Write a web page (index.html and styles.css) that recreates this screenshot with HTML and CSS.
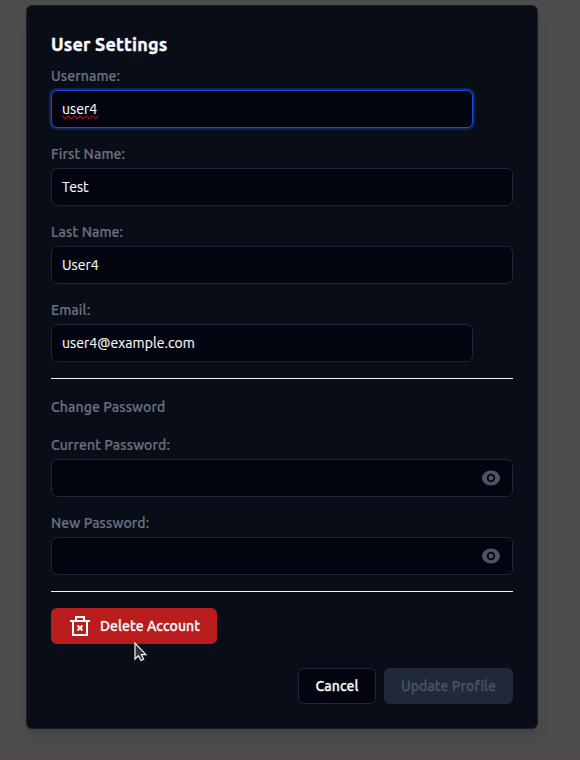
FILE: index.html
```html
<!DOCTYPE html>
<html lang="en">
<head>
<meta charset="utf-8">
<title>User Settings</title>
<link rel="stylesheet" href="styles.css">
</head>
<body>
<main class="modal">
  <h1 class="title">User Settings</h1>
  <div class="field"><span class="label">Username:</span><div class="input short focused"><span class="misspelled">user4<svg class="squiggle" width="36" height="5" viewBox="0 0 36 5"><path d="M0 1 Q1.500 1 3 3.500 Q4.500 3.500 6 1 Q7.500 1 9 3.500 Q10.500 3.500 12 1 Q13.500 1 15 3.500 Q16.500 3.500 18 1 Q19.500 1 21 3.500 Q22.500 3.500 24 1 Q25.500 1 27 3.500 Q28.500 3.500 30 1 Q31.500 1 33 3.500 Q34.500 3.500 36 1"/></svg></span></div></div>
  <div class="field"><span class="label">First Name:</span><div class="input">Test</div></div>
  <div class="field"><span class="label">Last Name:</span><div class="input">User4</div></div>
  <div class="field"><span class="label">Email:</span><div class="input short">user4@example.com</div></div>
  <hr class="divider">
  <h2 class="subtitle">Change Password</h2>
  <div class="field"><span class="label">Current Password:</span><div class="input password"><svg class="eye" width="20" height="20" viewBox="0 0 20 20"><path d="M10 2.500C5.300 2.500 1 6 1 10s4.300 7.500 9 7.500 9-3.500 9-7.500-4.300-7.500-9-7.500Zm0 11.700a4.200 4.200 0 1 1 0-8.400 4.200 4.200 0 0 1 0 8.400Zm0-6.600a2.400 2.400 0 1 0 0 4.800 2.400 2.400 0 0 0 0-4.800Z"/></svg></div></div>
  <div class="field"><span class="label">New Password:</span><div class="input password"><svg class="eye" width="20" height="20" viewBox="0 0 20 20"><path d="M10 2.500C5.300 2.500 1 6 1 10s4.300 7.500 9 7.500 9-3.500 9-7.500-4.300-7.500-9-7.500Zm0 11.700a4.200 4.200 0 1 1 0-8.400 4.200 4.200 0 0 1 0 8.400Zm0-6.600a2.400 2.400 0 1 0 0 4.800 2.400 2.400 0 0 0 0-4.800Z"/></svg></div></div>
  <hr class="divider">
  <div class="danger"><button class="button delete"><svg class="trash" width="20" height="20" viewBox="0 0 20 20"><path d="M0 5h20M3 5v14h14V5M6 5V1h8v4"/><path class="cross" d="M7.500 9.500l5 5M12.500 9.500l-5 5"/></svg><span>Delete Account</span></button></div>
  <footer class="actions"><button class="button cancel">Cancel</button><button class="button update" disabled>Update Profile</button></footer>
</main>
<svg class="cursor" width="13" height="20" viewBox="0 0 13 20"><path d="M1 1v16l3.400-3.300 2.600 4.800 2.700-1.300-2.300-4.500H12Z"/></svg>
</body>
</html>
```

FILE: styles.css
```css
* { box-sizing: border-box; }
body {
  margin: 0;
  height: 760px;
  padding: 5px 42px 0 26px;
  overflow: hidden;
  background: #4c4c4c;
  border-bottom: 3px solid #514a50;
  font: 14px/20px Ubuntu, "Noto Sans", sans-serif;
  color: #f8fafc;
}
.modal {
  width: 512px;
  height: 724px;
  padding: 24px;
  background: #090d18;
  border: 1px solid #172031;
  border-radius: 6px;
  box-shadow: 0 10px 15px -3px rgba(0,0,0,.1), 0 4px 6px -4px rgba(0,0,0,.1);
}
.title { margin: 0 0 8px; padding-top: 1px; font-size: 18px; line-height: 27px; font-weight: 700; letter-spacing: .19px; -webkit-text-stroke: .4px; }
.field { margin-bottom: 16px; }
.label, .subtitle { display: block; margin: 0 0 4px; font-size: 14px; line-height: 20px; font-weight: 500; color: #6b7280; letter-spacing: .1px; -webkit-text-stroke: .2px; }
.input {
  display: flex;
  align-items: center;
  height: 38px;
  padding: 0 10px;
  background: #02050f;
  border: 1px solid #1e2533;
  border-radius: 6px;
  letter-spacing: .05px;
  -webkit-text-stroke: .15px;
}
.short { width: 422px; }
.focused { border-color: #1d4ed8; box-shadow: 0 0 0 2px #10245b; }
.misspelled { position: relative; }
.squiggle { position: absolute; left: 0; top: 16px; fill: none; stroke: #d80008; stroke-width: 1.200; }
.divider { height: 1px; margin: 0; border: 0; background: #f1f3f6; }
.subtitle { margin: 18px 0; }
.password { justify-content: flex-end; padding-right: 11px; }
.eye { fill: #4b5563; }
.danger { margin-top: 16px; height: 36px; }
.button {
  display: flex;
  align-items: center;
  justify-content: center;
  height: 36px;
  padding: 0;
  border: 0;
  border-radius: 6px;
  font: 500 14px/20px Ubuntu, "Noto Sans", sans-serif;
  letter-spacing: .08px;
  -webkit-text-stroke: .3px;
  color: #f8fafc;
}
.delete { width: 166px; gap: 10px; padding-left: 2px; background: #b91c1c; }
.trash { fill: none; stroke: #fff; stroke-width: 2; }
.cross { stroke-width: 1.800; }
.actions { display: flex; justify-content: flex-end; gap: 8px; margin-top: 24px; }
.cancel { width: 78px; background: #02050f; border: 1px solid #1e293b; }
.update { width: 129px; background: #1f2937; color: #4a5462; }
.cursor { position: absolute; left: 134px; top: 642px; fill: #333; stroke: #f3f3f3; stroke-width: 1.200; }
```
